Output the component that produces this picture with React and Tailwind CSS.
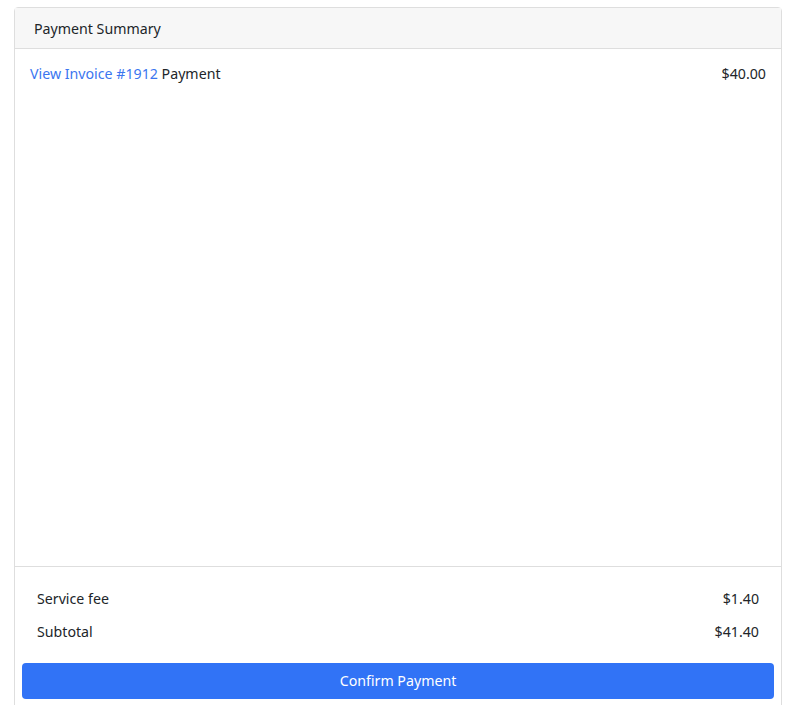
export default function App() {
	return (
		<div
			className="min-h-[705px] bg-white px-[14px] pt-[7px] text-[14.2px] text-[#212529]"
			style={{ fontFamily: '"Noto Sans", "Open Sans", sans-serif' }}
		>
			<div className="rounded-t-[4px] border border-[#dedede]">
				<div className="flex h-[41px] items-center border-b border-[#dedede] bg-[#f7f7f7] px-[19px] pt-[1px]">
					<span>Payment Summary</span>
				</div>
				<div className="h-[517px] px-[15px] pt-[14px]">
					<div className="flex items-center justify-between leading-[22px]">
						<div>
							<a href="#" className="text-[#3b76f0]">
								View Invoice #1912
							</a>{" "}
							Payment
						</div>
						<span>$40.00</span>
					</div>
				</div>
				<div className="border-t border-[#dedede] px-[7px] pt-[21px] pb-[12px]">
					<div className="flex flex-col gap-[11px] px-[15px] leading-[22px]">
						<div className="flex justify-between">
							<span>Service fee</span>
							<span>$1.40</span>
						</div>
						<div className="flex justify-between">
							<span>Subtotal</span>
							<span>$41.40</span>
						</div>
					</div>
					<button className="mt-[20px] flex h-[36px] w-full items-center justify-center rounded-[4px] bg-[#3173f6] text-white">
						Confirm Payment
					</button>
				</div>
			</div>
		</div>
	)
}
